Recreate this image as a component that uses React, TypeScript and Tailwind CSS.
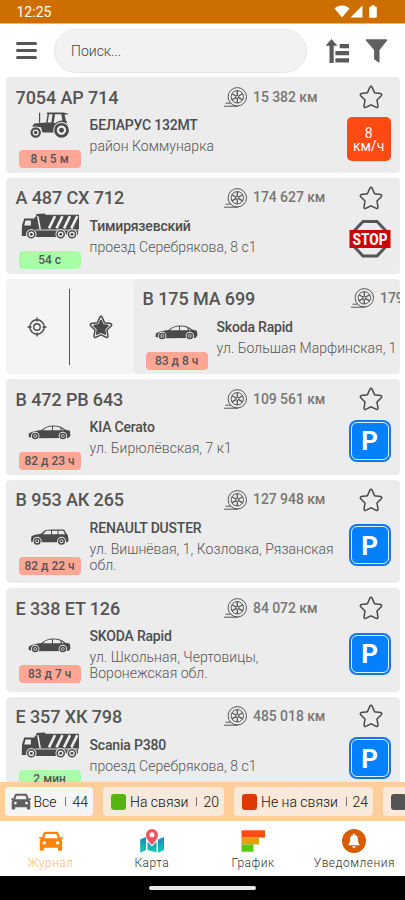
import type { ReactNode } from "react";

type VehicleKind = "tractor" | "truck" | "sedan" | "suv";

type Vehicle = {
    plate: string;
    name: string;
    address: string;
    mileage: string;
    kind: VehicleKind;
    time: string;
    online?: boolean;
    tall?: boolean;
    swiped?: boolean;
    status: "speed" | "stop" | "parking";
};

const vehicles: Vehicle[] = [
    { plate: "7054 АР 714", name: "БЕЛАРУС 132МТ", address: "район Коммунарка", mileage: "15 382 км", kind: "tractor", time: "8 ч 5 м", status: "speed" },
    { plate: "А 487 СХ 712", name: "Тимирязевский", address: "проезд Серебрякова, 8 с1", mileage: "174 627 км", kind: "truck", time: "54 с", online: true, status: "stop" },
    { plate: "В 175 МА 699", name: "Skoda Rapid", address: "ул. Большая Марфинская, 1", mileage: "179 204 км", kind: "sedan", time: "83 д 8 ч", swiped: true, status: "parking" },
    { plate: "В 472 РВ 643", name: "KIA Cerato", address: "ул. Бирюлёвская, 7 к1", mileage: "109 561 км", kind: "sedan", time: "82 д 23 ч", status: "parking" },
    { plate: "В 953 АК 265", name: "RENAULT DUSTER", address: "ул. Вишнёвая, 1, Козловка, Рязанская обл.", mileage: "127 948 км", kind: "suv", time: "82 д 22 ч", tall: true, status: "parking" },
    { plate: "Е 338 ЕТ 126", name: "SKODA Rapid", address: "ул. Школьная, Чертовицы, Воронежская обл.", mileage: "84 072 км", kind: "sedan", time: "83 д 7 ч", tall: true, status: "parking" },
    { plate: "Е 357 ХК 798", name: "Scania P380", address: "проезд Серебрякова, 8 с1", mileage: "485 018 км", kind: "truck", time: "2 мин", online: true, status: "parking" },
];

const STAR = "M12 1.300c.5 0 .9.3 1.100.8l2.500 5.600 6 .9c1.100.2 1.500 1.300.7 2.100l-4.300 4.300 1 6.100c.1 1-.9 1.700-1.700 1.200L12 19.800l-5.300 2.500c-.8.5-1.800-.2-1.700-1.200l1-6.100-4.300-4.300c-.8-.8-.4-1.900.7-2.100l6-.9 2.500-5.600c.2-.5.6-.8 1.100-.8z";

const Star = () => (
    <svg className="h-6 w-6" viewBox="0 0 24 24" fill="none" stroke="#4a4a4a" strokeWidth="1.500">
        <path d={STAR} />
    </svg>
);

const StarFilled = () => (
    <svg className="h-6 w-6" viewBox="0 0 24 24" fill="none">
        <path d={STAR} stroke="#4a4a4a" strokeWidth="1.500" />
        <path d={STAR} fill="#4a4a4a" transform="translate(3.240 3.500) scale(.73)" />
    </svg>
);

const Tire = () => (
    <svg className="h-5 w-6 shrink-0" viewBox="0 0 24 20" fill="none" stroke="#555" strokeWidth="1">
        <circle cx="13.300" cy="9.800" r="9.200" />
        <circle cx="13.300" cy="9.800" r="6.200" />
        <circle cx="13.300" cy="9.800" r="1.500" />
        <path d="M13.300 3.600v4.700M13.300 11.300V16M7.900 6.700l4.100 2.300M14.600 10.600l4.100 2.300M7.900 12.900l4.100-2.300M14.600 9l4.100-2.300" strokeWidth="1.300" />
        <path d="M0 19.200h14M1.500 16.200h5" />
    </svg>
);

const Wheel = ({ x, y, r, rim = 1.5 }: { x: number; y: number; r: number; rim?: number }) => (
    <g>
        <circle cx={x} cy={y} r={r + 0.9} fill="#ececec" />
        <circle cx={x} cy={y} r={r - rim / 2} fill="#ececec" stroke="#4a4a4a" strokeWidth={rim} />
        <circle cx={x} cy={y} r={r * 0.33} fill="#4a4a4a" />
    </g>
);

const VehicleIcon = ({ kind }: { kind: VehicleKind }) => {
    if (kind === "tractor") {
        return (
            <svg className="h-[26px] w-10 shrink-0" viewBox="0 0 40 26" fill="#4a4a4a">
                <path d="M9 .8h1.200v10H9zM2 14.500L4.300 11.500l12-.9L17.600 2l-1-.3.300-1.200h16.300l4.600 1v1h-3.300l1.500 6.500H37v1.200h-1l2 3-8 7.300H12.500L11 15.300z" />
                <path d="M19 2.200h3.600l-1.300 8.300h-3.600zM25 2.200h6.400l1 6.200c-3 .2-5.200 1-6.700 2.500h-2z" fill="#ececec" />
                <Wheel x={5.700} y={20.500} r={5.200} rim={2.100} />
                <Wheel x={31.500} y={18.300} r={7.400} rim={2.700} />
            </svg>
        );
    }
    if (kind === "truck") {
        return (
            <svg className="h-[26px] w-[58px] shrink-0" viewBox="0 0 58 26" fill="#4a4a4a">
                <path d="M3.200 5.500h10.500V3.700h1.600V1l8-.5 1.500 1.200H58v15.800h-1v4H40v2.500H14V23H.8v-2.200L1 12.500z" />
                <path d="M4.500 7.400h5.400v5H3.200zM16 3.200h1.600l2.400 13h-1.600z" fill="#ececec" />
                <path d="M14.500 17h43.500" stroke="#ececec" strokeWidth=".9" fill="none" />
                <path d="M34 3.200L28 15.300M41.500 3.200l-6 12.100M49 3.200l-6 12.100M56.300 3.200l-6 12.100" stroke="#ececec" strokeWidth="2.600" />
                <Wheel x={10.300} y={21.300} r={4.300} />
                <Wheel x={39.700} y={21.300} r={4.300} />
                <Wheel x={51} y={21.300} r={4.300} />
            </svg>
        );
    }
    if (kind === "suv") {
        return (
            <svg className="h-4 w-10 shrink-0" viewBox="0 0 40 16" fill="#4a4a4a">
                <path d="M1 12.500l.4-5L4 6l7-1.200L15.200.9l6.800-.5h12l3 4.800 1 1.500.6 5-1.600 1.500H3z" />
                <path d="M13 5.300L16.200 1.700h4.800v3.600zM22 1.700h5.500v3.600H22zM28.500 1.700h4.700l2 3.600h-6.700z" fill="#ececec" />
                <Wheel x={7.200} y={12.200} r={3.500} />
                <Wheel x={31.500} y={12.200} r={3.500} />
            </svg>
        );
    }
    return (
        <svg className="h-[15px] w-[43px] shrink-0" viewBox="0 0 43 15" fill="#4a4a4a">
            <path d="M.6 12l.2-3.600C3.500 6.500 9 5.500 13.500 5 17 2 20 .6 25 .5c5-.1 9 .9 12 4l5 1.200.4 5-2 2.200L8 13.200z" />
            <path d="M15 5.300c2.500-2.400 5-3.600 9-3.700v3.700zM25 1.600c3 0 5.500.3 7.300 1.200l.5 2.500H25zM33.500 3.300l2.500 2h-2z" fill="#ececec" />
            <Wheel x={7.200} y={11} r={3.300} />
            <Wheel x={34.800} y={11} r={3.300} />
        </svg>
    );
};

const Status = ({ status }: { status: Vehicle["status"] }) => {
    if (status === "speed") {
        return (
            <div className="mr-[2px] flex h-11 w-11 flex-col items-center justify-center rounded-[5px] bg-[#ff4a12] pt-[2px] text-[14px] leading-[13px] text-white">
                <span>8</span>
                <span>км/ч</span>
            </div>
        );
    }
    if (status === "stop") {
        return (
            <svg className="h-[42px] w-[42px]" viewBox="0 0 42 42">
                <path d="M14 3.500h14L37.500 13.500v14.500L28 38h-14L4.500 28V13.500z" fill="#ececec" stroke="#565656" strokeWidth="3" />
                <rect x=".5" y="12" width="41" height="18" fill="#cc0404" />
                <text x="21" y="26.600" textAnchor="middle" textLength="35" lengthAdjust="spacingAndGlyphs" fontSize="16" fontWeight="800" fill="#fff">STOP</text>
            </svg>
        );
    }
    return (
        <div className="h-[42px] w-[42px] rounded-[8px] bg-[#1276ea] p-[2px]">
            <div className="flex h-full w-full items-center justify-center rounded-[6px] border-[1.5px] border-[#d8f4ff] bg-[#0580fb] pt-px text-[26px] leading-none font-bold text-white">
                P
            </div>
        </div>
    );
};

const VehicleCard = ({ item }: { item: Vehicle }) => (
    <div className={`flex w-[395px] shrink-0 flex-col rounded-[4px] bg-[#ececec] ${item.tall ? "h-[103.300px]" : "h-[95.700px]"}`}>
        <div className="flex h-[35px] shrink-0 items-center pt-[4.500px] pl-[10px]">
            <p className="w-[208.500px] text-[18px] font-medium tracking-[-0.120px] whitespace-nowrap text-[#555]">{item.plate}</p>
            <Tire />
            <p className="ml-[5px] w-[105.500px] text-[14px] font-medium tracking-[-0.080px] whitespace-nowrap text-[#777]">{item.mileage}</p>
            <Star />
        </div>
        <div className="flex min-h-0 flex-1 pb-[4.700px] pl-[13px]">
            <div className="flex w-[62px] flex-col items-center justify-center">
                <div className="flex h-[26px] shrink-0 items-end">
                    <VehicleIcon kind={item.kind} />
                </div>
                <div className={`mt-3 h-[18px] w-full shrink-0 rounded-[4px] text-center text-[12px] leading-[18px] font-medium text-[#555] ${item.online ? "bg-[#a8ffa8]" : "bg-[#ffa695]"}`}>
                    {item.time}
                </div>
            </div>
            <div className="ml-[9px] w-[251px] pt-[3px]">
                <p className="text-[14px] leading-5 font-medium tracking-[-0.200px] text-[#4d4d4d]">{item.name}</p>
                <p className="mt-[3px] text-[14px] leading-4 font-light tracking-[0.030px] text-[#555]">{item.address}</p>
            </div>
            <div className="flex w-[58px] items-center justify-center pb-[3px]">
                <Status status={item.status} />
            </div>
        </div>
    </div>
);

const SwipeActions = () => (
    <div className="flex w-[127px] shrink-0 items-center bg-[#f4f4f4]">
        <div className="flex w-[63px] justify-center">
            <svg className="h-5 w-5" viewBox="0 0 20 20" fill="none" stroke="#4a4a4a" strokeWidth="1.400">
                <circle cx="10" cy="10" r="7.200" />
                <circle cx="10" cy="10" r="3.200" />
                <path d="M10 .5v4M10 15.500v4M.5 10h4M15.500 10h4" />
            </svg>
        </div>
        <div className="h-[76px] w-px bg-[#555]" />
        <div className="flex flex-1 justify-center">
            <StarFilled />
        </div>
    </div>
);

const Chip = ({ icon, label, count, className }: { icon: ReactNode; label: string; count: string; className: string }) => (
    <div className={`flex h-[29px] shrink-0 items-center rounded-[4px] text-[14px] font-light whitespace-nowrap text-[#111] ${className}`}>
        {icon}
        <span className="pt-[2px]">{label}</span>
        <span className="ml-2 h-[9px] w-px bg-[#777]" />
        <span className="ml-auto pt-[2px]">{count}</span>
    </div>
);

const CarFront = ({ className, fill }: { className: string; fill: string }) => (
    <svg className={className} viewBox="0 0 24 20" fill={fill}>
        <path fillRule="evenodd" d="M6.500.8h11c1 0 1.800.5 2.100 1.400l1.500 4.300 2-.5c.8-.1 1.200.8.700 1.300l-1.500 1.100c.6.700.9 1.500.9 2.400v8c0 .5-.4.9-.9.9h-2.400c-.5 0-.9-.4-.9-.9v-2H5v2c0 .5-.4.9-.9.9H1.700c-.5 0-.9-.4-.9-.9v-8c0-.9.3-1.700.9-2.400L.2 7.300C-.3 6.800.1 5.900.9 6l2 .5 1.500-4.300C4.700 1.300 5.500.8 6.500.8zM6.600 3L5.200 7.200h13.600L17.400 3zM5.300 10.200a1.700 1.700 0 100 3.400 1.700 1.700 0 000-3.400zm13.400 0a1.700 1.700 0 100 3.400 1.700 1.700 0 000-3.400z" />
    </svg>
);

const MapIcon = () => (
    <svg className="h-6 w-6" viewBox="0 0 24 24">
        <defs>
            <linearGradient id="sea" x1="0" y1="0" x2="0" y2="1">
                <stop offset="0" stopColor="#1686c8" />
                <stop offset="1" stopColor="#16cbb0" />
            </linearGradient>
        </defs>
        <path d="M.2 10.500L6 8v13L.2 23.800zM7.500 12.500l4.500 5 4.500-5v11.100L7.500 21zM18 10.500L24 8v13l-6 2.800z" fill="url(#sea)" />
        <path d="M12 0a6 6 0 016 6c0 4-4 7.500-6 10C10 13.500 6 10 6 6a6 6 0 016-6z" fill="#f4525a" />
        <circle cx="12" cy="5.800" r="2.500" fill="#fff" />
    </svg>
);

const ChartIcon = () => (
    <svg className="h-6 w-6" viewBox="0 0 24 24">
        <rect x=".5" y="1.300" width="23.500" height="7.200" fill="#ff4a10" />
        <rect x=".5" y="8.500" width="17.500" height="7" fill="#e0a30c" />
        <rect x=".5" y="15.500" width="12" height="7.200" fill="#5cc80c" />
    </svg>
);

const BellIcon = () => (
    <svg className="h-6 w-6" viewBox="0 0 24 24">
        <circle cx="12" cy="12" r="12" fill="#d65c06" />
        <path d="M12 4.800c.7 0 1.100.5 1.100 1.100 2 .6 2.800 2.200 2.900 4.500.1 2.800.5 3.900 1.500 5v.8h-11v-.8c1-1.100 1.400-2.200 1.500-5 .1-2.300.9-3.900 2.900-4.500 0-.6.4-1.100 1.100-1.100zM10.200 17.200h3.600c-.2 1-.9 1.600-1.800 1.600s-1.600-.6-1.800-1.600z" fill="#fff" />
    </svg>
);

const tabs = [
    { label: "Журнал", icon: <CarFront className="h-5 w-6" fill="#fb8308" />, active: true },
    { label: "Карта", icon: <MapIcon /> },
    { label: "График", icon: <ChartIcon /> },
    { label: "Уведомления", icon: <BellIcon /> },
];

const App = () => {
    return (
        <div className="flex h-[900px] w-[405px] flex-col overflow-hidden bg-white font-[Roboto,sans-serif]">
            <div className="flex h-6 shrink-0 items-center border-b border-[#e5b485] bg-[#cc6e00] pr-[27px] pl-[16.500px] text-white">
                <span className="pt-px text-[14px]">12:25</span>
                <svg className="ml-auto h-[13px] w-[44px]" viewBox="0 0 44 13" fill="#fff">
                    <path d="M.5 3.500C4.500-.5 11.500-.5 15.500 3.500L8 12.500z" />
                    <path d="M28.500.5v12h-12z" />
                    <path d="M37.500.3h3v1.400h1.300c.6 0 1 .4 1 1v9c0 .6-.4 1-1 1h-5.600c-.6 0-1-.4-1-1v-9c0-.6.4-1 1-1h1.300z" />
                </svg>
            </div>

            <div className="flex h-[53.300px] shrink-0 items-center pl-[15.500px]">
                <div className="flex w-[21px] flex-col gap-[4px]">
                    <div className="h-[3px] rounded-full bg-[#555]" />
                    <div className="h-[3px] rounded-full bg-[#555]" />
                    <div className="h-[3px] rounded-full bg-[#555]" />
                </div>
                <div className="ml-[17.500px] flex h-11 w-[253px] items-center rounded-full border border-[#e8e8e8] bg-[#f2f2f2] pt-[2px] pl-4 text-[14px] font-light text-[#444]">
                    Поиск...
                </div>
                <svg className="ml-[18px] h-6 w-6" viewBox="0 0 24 24" fill="#5a5a5a">
                    <path d="M6.500 0l6 6.800H8.700V24H4.500V6.800H.5zM14.700 5H24v4.200h-9.300zM10.400 12H24v4.300H10.400zM10.400 19.200H24v4.300H10.400z" />
                </svg>
                <svg className="ml-4 h-6 w-[23px]" viewBox="0 0 23 24" fill="#606060">
                    <path d="M1.500.3h20c.7 0 1 .8.6 1.300L14.500 11v12c0 .5-.5.700-.9.400l-4.500-3.200V11L.9 1.600C.5 1.100.8.300 1.500.3z" />
                </svg>
            </div>

            <div className="flex min-h-0 flex-1 flex-col gap-[5px] overflow-hidden pl-[5.600px]">
                {vehicles.map((item) => (
                    <div key={item.plate} className="flex w-[394.800px] shrink-0 overflow-hidden rounded-[4px]">
                        {item.swiped && <SwipeActions />}
                        <VehicleCard item={item} />
                    </div>
                ))}
            </div>

            <div className="flex h-[39px] shrink-0 items-center overflow-hidden bg-[#fecf9b] pl-[5px]">
                <Chip
                    icon={<CarFront className="mr-[3px] h-[17px] w-5 shrink-0" fill="#606060" />}
                    label="Все"
                    count="44"
                    className="w-[88px] bg-[#f5f5f5] pr-[5px] pl-[5.500px]"
                />
                <Chip
                    icon={<span className="mr-[4px] h-4 w-[15px] shrink-0 rounded-[3px] bg-[#54b410]" />}
                    label="На связи"
                    count="20"
                    className="ml-[10px] w-[121px] bg-[#f8e9da] pr-[5px] pl-2"
                />
                <Chip
                    icon={<span className="mr-[4px] h-4 w-[15px] shrink-0 rounded-[3px] bg-[#de3804]" />}
                    label="Не на связи"
                    count="24"
                    className="ml-[10px] w-[139px] bg-[#f8e9da] pr-[5px] pl-2"
                />
                <Chip
                    icon={<span className="mr-[4px] h-4 w-[15px] shrink-0 rounded-[3px] bg-[#555]" />}
                    label=""
                    count=""
                    className="ml-[10px] w-[139px] bg-[#f8e9da] pr-[5px] pl-2"
                />
            </div>

            <div className="grid h-[55px] shrink-0 grid-cols-4">
                {tabs.map((tab) => (
                    <div key={tab.label} className="flex flex-col items-center pt-2">
                        <div className="flex h-6 items-center">{tab.icon}</div>
                        <span className={`mt-[2px] text-[12px] leading-4 font-light tracking-[0.500px] ${tab.active ? "text-[#fdb870]" : "text-[#333]"}`}>{tab.label}</span>
                    </div>
                ))}
            </div>

            <div className="flex h-6 shrink-0 items-center justify-center bg-black">
                <div className="h-1 w-[107px] rounded-full bg-[#e8e8e8]" />
            </div>
        </div>
    );
};
export default App;
